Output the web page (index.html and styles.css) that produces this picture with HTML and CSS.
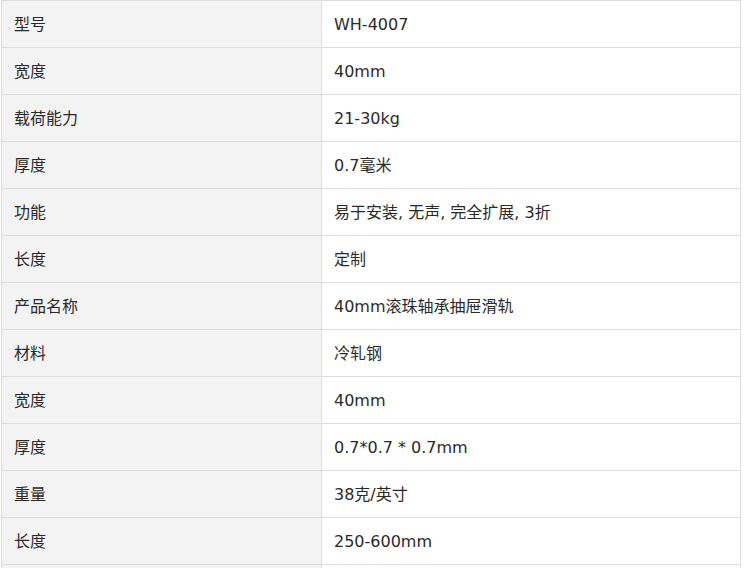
FILE: index.html
```html
<!DOCTYPE html>
<html lang="zh">
<head>
<meta charset="utf-8">
<link rel="stylesheet" href="styles.css">
</head>
<body>
<div class="wrap">
<table class="spec">
<tbody>
<tr><th>型号</th><td>WH-4007</td></tr>
<tr><th>宽度</th><td>40mm</td></tr>
<tr><th>载荷能力</th><td>21-30kg</td></tr>
<tr><th>厚度</th><td>0.7毫米</td></tr>
<tr><th>功能</th><td>易于安装, 无声, 完全扩展, 3折</td></tr>
<tr><th>长度</th><td>定制</td></tr>
<tr><th>产品名称</th><td>40mm滚珠轴承抽屉滑轨</td></tr>
<tr><th>材料</th><td>冷轧钢</td></tr>
<tr><th>宽度</th><td>40mm</td></tr>
<tr><th>厚度</th><td>0.7*0.7 * 0.7mm</td></tr>
<tr><th>重量</th><td>38克/英寸</td></tr>
<tr><th>长度</th><td>250-600mm</td></tr>
<tr><th>&nbsp;</th><td>&nbsp;</td></tr>
</tbody>
</table>
</div>
</body>
</html>
```
FILE: styles.css
```css
html, body {
  margin: 0;
  padding: 0;
  background: #fff;
}
.wrap {
  padding-left: 1px;
  width: 740px;
}
.spec {
  width: 740px;
  border-collapse: collapse;
  table-layout: fixed;
  font-family: "DejaVu Sans", "Noto Sans CJK SC", sans-serif;
  font-size: 16px;
  line-height: 22px;
  color: #2a2a2a;
}
.spec th, .spec td {
  border: 1px solid #dddddd;
  height: 46px;
  padding: 2px 12px 0;
  box-sizing: border-box;
  text-align: left;
  font-weight: normal;
  vertical-align: middle;
}
.spec tr { height: 47px; }
.spec th {
  width: 320px;
  background: #f3f3f3;
}
.spec td {
  background: #fff;
}
```
